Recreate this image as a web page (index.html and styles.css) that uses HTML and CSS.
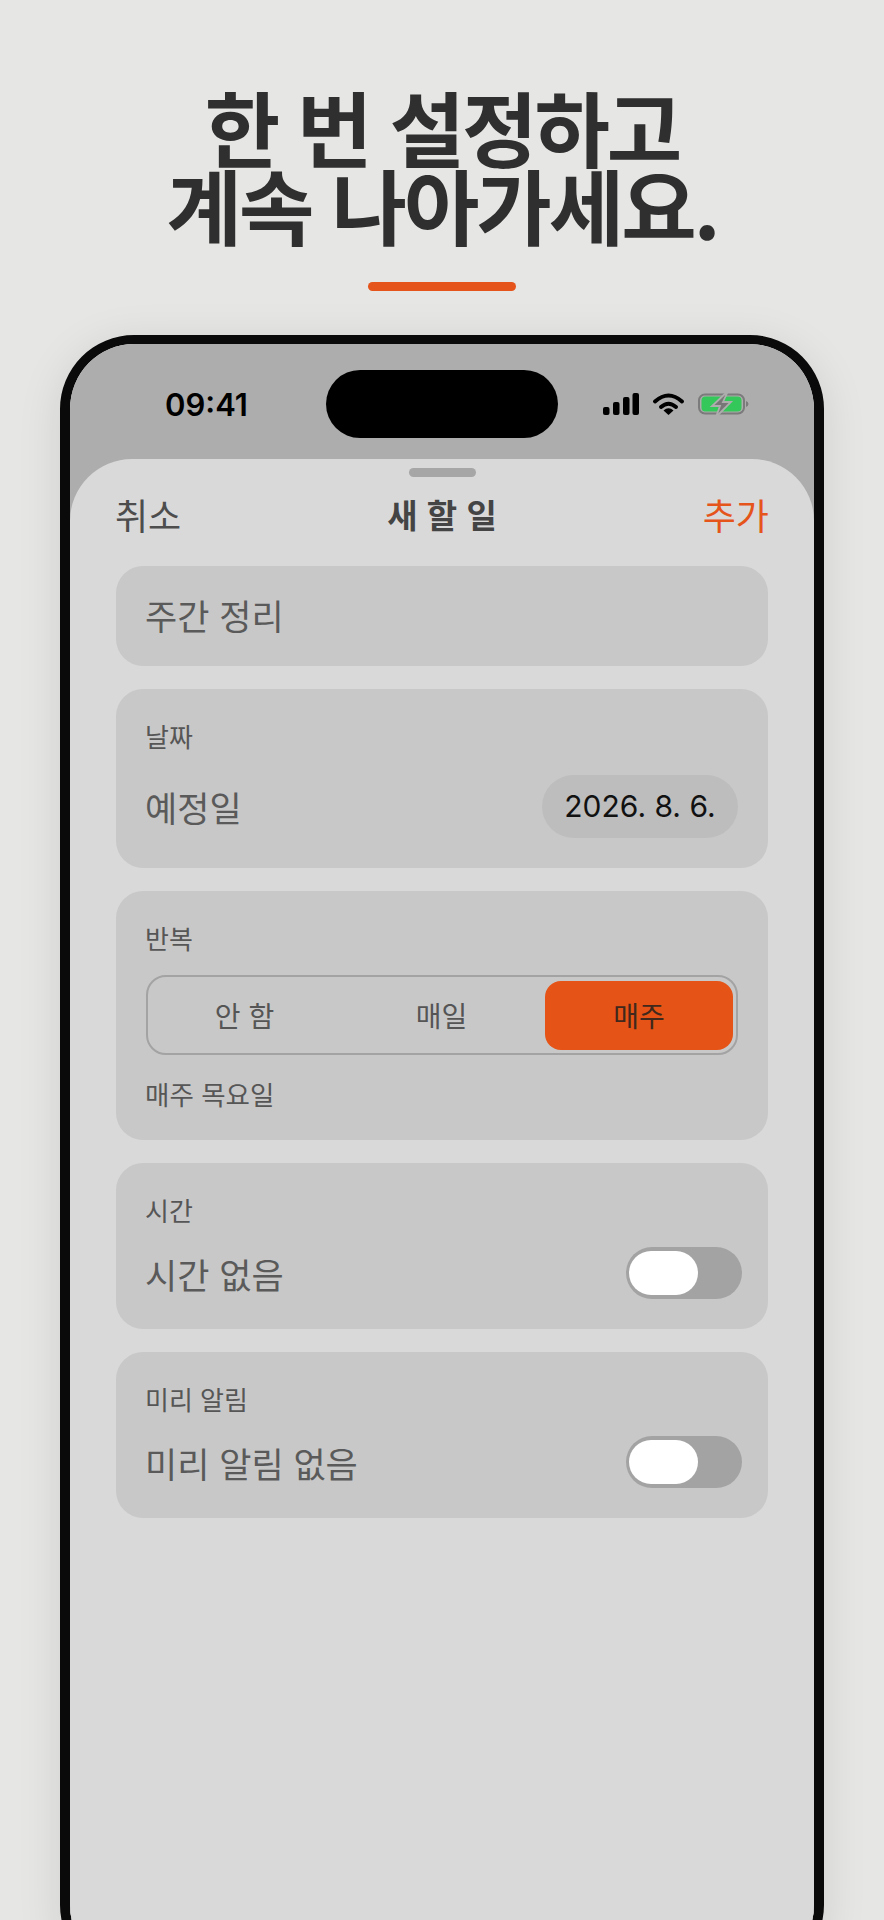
FILE: index.html
```html
<!DOCTYPE html>
<html lang="ko">
<head>
  <meta charset="UTF-8">
  <title>새 할 일</title>
  <link rel="stylesheet" href="styles.css">
</head>
<body>

<header class="hero">
  <h1>한 번 설정하고<br>계속 나아가세요.</h1>
  <div class="hero-bar"></div>
</header>

<div class="phone">
  <div class="screen">

    <div class="status">
      <span class="time">09:41</span>
      <div class="island"></div>
      <div class="status-icons">
        <svg class="ico-signal" width="36" height="22" viewBox="0 0 36 22">
          <rect x="0" y="14" width="6.5" height="8" rx="2"/>
          <rect x="10" y="9" width="6.5" height="13" rx="2"/>
          <rect x="20" y="4" width="6.5" height="18" rx="2"/>
          <rect x="29.5" y="0" width="6.5" height="22" rx="2"/>
        </svg>
        <svg class="ico-wifi" width="31" height="22" viewBox="0 0 31 22">
          <path d="M2 8.5 Q15.5 -3.5 29 8.5" fill="none" stroke="#000" stroke-width="4" stroke-linecap="round"/>
          <path d="M8 14 Q15.5 7.5 23 14" fill="none" stroke="#000" stroke-width="4" stroke-linecap="round"/>
          <path d="M10.5 17.5 Q15.5 13 20.5 17.5 L15.5 22 Z"/>
        </svg>
        <svg class="ico-battery" width="51" height="22" viewBox="0 0 51 22">
          <rect x="1" y="1.5" width="45" height="19" rx="6" fill="none" stroke="#7b7b7b" stroke-width="2"/>
          <rect x="3.5" y="3.5" width="40" height="15" rx="4" fill="#34c759"/>
          <path d="M48 8 Q50.5 9 50.5 11 Q50.5 13 48 14 Z" fill="#7b7b7b"/>
          <path d="M30 -2 L14 13 L22 13 L18 24 L33 9 L25 9 Z" fill="#777" stroke="#adadad" stroke-width="1.8"/>
        </svg>
      </div>
    </div>

    <div class="sheet">
      <div class="handle"></div>

      <div class="nav">
        <span class="nav-cancel">취소</span>
        <span class="nav-title">새 할 일</span>
        <span class="nav-add">추가</span>
      </div>

      <div class="card card-input">
        <span class="row-text">주간 정리</span>
      </div>

      <div class="card">
        <div class="card-label">날짜</div>
        <div class="row row-date">
          <span class="row-text">예정일</span>
          <span class="date-pill">2026. 8. 6.</span>
        </div>
      </div>

      <div class="card card-repeat">
        <div class="card-label">반복</div>
        <div class="segment">
          <div class="seg-item">안 함</div>
          <div class="seg-item">매일</div>
          <div class="seg-item seg-active">매주</div>
        </div>
        <div class="card-note">매주 목요일</div>
      </div>

      <div class="card">
        <div class="card-label">시간</div>
        <div class="row">
          <span class="row-text">시간 없음</span>
          <div class="toggle"><div class="knob"></div></div>
        </div>
      </div>

      <div class="card">
        <div class="card-label">미리 알림</div>
        <div class="row">
          <span class="row-text">미리 알림 없음</span>
          <div class="toggle"><div class="knob"></div></div>
        </div>
      </div>
    </div>

  </div>
</div>

</body>
</html>
```

FILE: styles.css
```css
html, body {
  margin: 0;
  height: 1920px;
  overflow: hidden;
}

body {
  background-color: #e6e6e4;
  font-family: "Noto Sans CJK KR", "Noto Sans", sans-serif;
  color: #555;
}

.hero {
  padding-top: 87px;
  text-align: center;
}

h1 {
  margin: 0;
  font-size: 82px;
  line-height: 78px;
  font-weight: 700;
  letter-spacing: -3px;
  color: #2f2f2f;
}

.hero-bar {
  width: 148px;
  height: 9px;
  margin: 39px auto 0;
  border-radius: 5px;
  background-color: #e5541a;
}

.phone {
  width: 764px;
  height: 1644px;
  margin: 44px auto 0;
  box-sizing: border-box;
  border: solid #0a0a0a;
  border-width: 9px 10px;
  border-radius: 74px;
  box-shadow: 0 8px 45px rgba(0, 0, 0, 0.1);
  overflow: hidden;
}

.screen {
  height: 100%;
  background-color: #adadad;
  display: flex;
  flex-direction: column;
}

.status {
  display: grid;
  grid-template-columns: 1fr auto 1fr;
  align-items: center;
  padding: 26px 0 21px;
}

.time {
  padding-left: 95px;
  font-family: Inter, "Liberation Sans", sans-serif;
  font-size: 31px;
  font-weight: 600;
  color: #000;
}

.island {
  width: 232px;
  height: 68px;
  border-radius: 34px;
  background-color: #000;
}

.status-icons {
  justify-self: end;
  display: flex;
  align-items: center;
  gap: 14px;
  padding-right: 65px;
}

.status-icons svg {
  display: block;
  overflow: visible;
}

.sheet {
  flex: 1;
  padding: 9px 46px 0;
  border-radius: 62px 62px 0 0;
  background-color: #d9d9d9;
  display: flex;
  flex-direction: column;
  gap: 23px;
}

.handle {
  width: 67px;
  height: 9px;
  margin: 0 auto -23px;
  border-radius: 5px;
  background-color: #a6a6a6;
}

.nav {
  display: flex;
  justify-content: space-between;
  align-items: center;
  height: 46px;
  margin: 14px -1px 6px -1px;
  font-size: 36px;
  color: #4d4d4d;
}

.nav-title {
  font-size: 33px;
  font-weight: 700;
  color: #444;
}

.nav-add {
  color: #e5541a;
}

.card {
  padding: 30px 30px 30px 29px;
  border-radius: 27px;
  background-color: #c8c8c8;
}

.card-input {
  height: 100px;
  box-sizing: border-box;
  padding-top: 0;
  padding-bottom: 4px;
  display: flex;
  align-items: center;
}

.card-label, .card-note {
  font-size: 26px;
  line-height: 34px;
  color: #565656;
}

.card-note {
  margin-top: 22px;
  font-size: 26.5px;
}

.row {
  display: flex;
  justify-content: space-between;
  align-items: center;
  margin-top: 20px;
}

.row-date {
  margin-top: 22px;
}

.row-text {
  font-size: 35px;
  color: #5a5a5a;
}

.date-pill {
  box-sizing: border-box;
  width: 196px;
  height: 63px;
  border-radius: 32px;
  background-color: #bdbdbd;
  font-family: Inter, "Liberation Sans", sans-serif;
  font-size: 30px;
  line-height: 63px;
  text-align: center;
  color: #111;
}

.card-repeat {
  padding-bottom: 29px;
}

.segment {
  display: grid;
  grid-template-columns: 1fr 1fr 188px;
  align-items: center;
  height: 80px;
  margin: 20px 0 0 1px;
  box-sizing: border-box;
  padding: 4px 3px 3px;
  border: 2px solid #a3a3a3;
  border-radius: 20px;
}

.seg-item {
  height: 69px;
  padding-right: 10px;
  font-size: 28px;
  line-height: 69px;
  text-align: center;
  color: #555;
}

.seg-active {
  padding-right: 0;
  border-radius: 16px;
  background-color: #e55416;
  color: #40281c;
}

.toggle {
  box-sizing: border-box;
  width: 116px;
  height: 52px;
  margin-right: -4px;
  padding: 4px 3px;
  border-radius: 26px;
  background-color: #a3a3a3;
}

.knob {
  width: 69px;
  height: 44px;
  border-radius: 22px;
  background-color: #fff;
}
```
